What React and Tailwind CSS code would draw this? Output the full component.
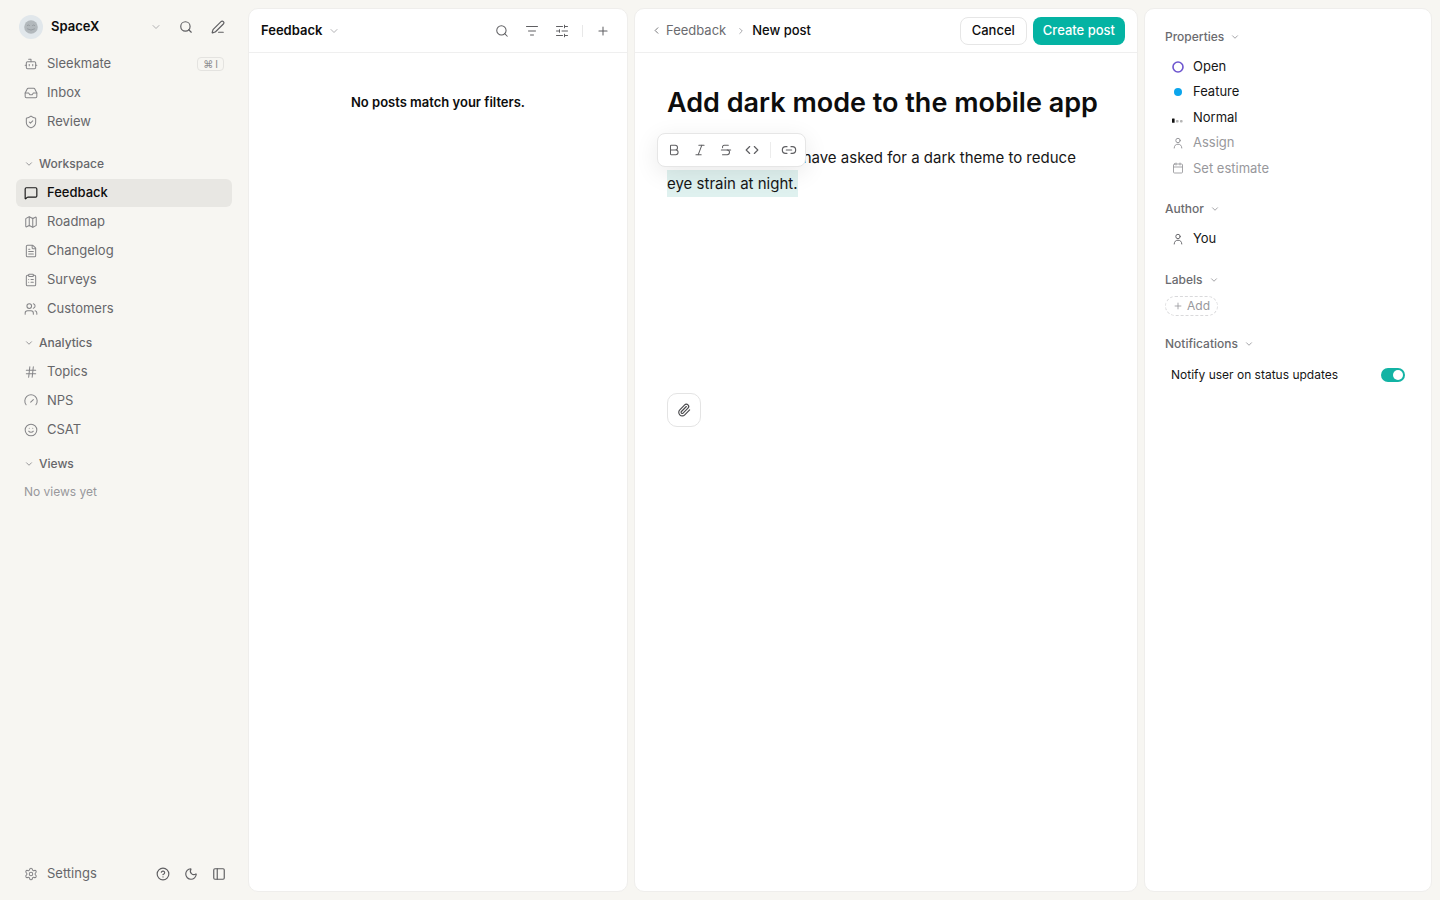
import React, { useState } from 'react';
import {
    Bold, Bot, Calendar, ChevronDown, ChevronLeft, ChevronRight, CircleHelp, ClipboardList, Code,
    FileText, Hash, Inbox, Italic, Link2, Map, MessageSquare, Moon, PanelLeft, Paperclip,
    PenLine, Plus, Search, Settings, ShieldCheck, Smile, Strikethrough, Users,
} from 'lucide-react';

const GaugeIcon = ({ size, strokeWidth, className }) => (
    <svg width={size} height={size} viewBox="0 0 24 24" fill="none" stroke="currentColor" strokeWidth={strokeWidth} strokeLinecap="round" className={className}>
        <path d="M3.6 18.5a10.6 10.6 0 1 1 16.8 0M11.5 14l4.5-4.5" />
    </svg>
);

const mainNav = [
    { label: 'Sleekmate', icon: Bot, shortcut: ['⌘', 'I'] },
    { label: 'Inbox', icon: Inbox },
    { label: 'Review', icon: ShieldCheck },
];

const workspaceNav = [
    { label: 'Feedback', icon: MessageSquare, active: true },
    { label: 'Roadmap', icon: Map },
    { label: 'Changelog', icon: FileText },
    { label: 'Surveys', icon: ClipboardList },
    { label: 'Customers', icon: Users },
];

const analyticsNav = [
    { label: 'Topics', icon: Hash },
    { label: 'NPS', icon: GaugeIcon },
    { label: 'CSAT', icon: Smile },
];

const FilterIcon = () => (
    <svg width="14" height="14" viewBox="0 0 14 14" fill="none" stroke="currentColor" strokeLinecap="round">
        <path d="M1.5 2.5h11M3.5 7h7M5.5 11h3" />
    </svg>
);

const SlidersIcon = () => (
    <svg width="14" height="14" viewBox="0 0 14 14" fill="none" stroke="currentColor" strokeLinecap="round">
        <path d="M1.5 2.5h6M9.5 2.5h3M9.5 1.2v2.6M1.5 7h3M7 7h5.5M4.5 5.7v2.6M1.5 11.5h6M9.5 11.5h3M9.5 10.2v2.6" />
    </svg>
);

const PersonIcon = () => (
    <svg width="14" height="14" viewBox="0 0 14 14" fill="none" stroke="currentColor" strokeLinecap="round">
        <circle cx="7" cy="4.5" r="2.2" />
        <path d="M3.2 12c0-2.4 1.6-3.8 3.8-3.8s3.8 1.4 3.8 3.8" />
    </svg>
);

const PriorityIcon = () => (
    <svg width="14" height="14" viewBox="0 0 14 14">
        <rect x="1" y="8.5" width="2.6" height="4.2" rx="0.5" fill="#111" />
        <rect x="5" y="10" width="2.6" height="2.6" rx="0.8" fill="#b5b5b5" />
        <rect x="9" y="10" width="2.6" height="2.6" rx="0.8" fill="#b5b5b5" />
    </svg>
);

const Avatar = () => (
    <svg width="24" height="24" viewBox="0 0 24 24">
        <circle cx="12" cy="12" r="12" fill="#e1e7eb" />
        <circle cx="12" cy="12" r="6.8" fill="#b2b8bc" />
        <path d="M8.3 10.4q1-1 2.2 0M13.5 10.4q1-1 2.2 0M8.5 14q3.5 2.4 7 0" fill="none" stroke="#969ca1" strokeWidth="1" strokeLinecap="round" />
    </svg>
);

const NavList = ({ items }) => (
    <ul className="flex flex-col gap-px">
        {items.map(({ label, icon: Icon, active, shortcut }) => (
            <li key={label}>
                <a
                    href="#"
                    className={`flex h-7 items-center gap-2 rounded-md px-2 text-[13px] ${active ? 'bg-[#e8e7e3] font-medium text-[#0d0d0d]' : 'text-[#66666a]'}`}
                >
                    <Icon size={14} strokeWidth={active ? 2 : 1.75} className={active ? 'text-[#1a1a1a]' : 'text-[#858588]'} />
                    <span className="flex-1 pl-px">{label}</span>
                    {shortcut && (
                        <kbd className="flex h-[14px] items-center gap-0.5 rounded border border-[#e4e3e0] px-[5px] font-[Inter,sans-serif] text-[10px] text-[#8c8c8e]">
                            {shortcut.map((key) => <span key={key}>{key}</span>)}
                        </kbd>
                    )}
                </a>
            </li>
        ))}
    </ul>
);

const NavHeading = ({ children }) => (
    <button type="button" className="mb-[3px] flex h-6 items-center gap-[5px] px-2 text-xs font-medium text-[#66666a]">
        <ChevronDown size={10} strokeWidth={2} className="text-[#858588]" />
        {children}
    </button>
);

const IconButton = ({ label, className = 'size-6', children }) => (
    <button type="button" aria-label={label} className={`flex shrink-0 items-center justify-center text-[#5f5f62] ${className}`}>
        {children}
    </button>
);

const PanelHeading = ({ children }) => (
    <button type="button" className="flex h-5 items-center gap-1.5 text-xs font-medium text-[#6b6b6f]">
        {children}
        <ChevronDown size={10} strokeWidth={2} className="text-[#929295]" />
    </button>
);

const Property = ({ icon, label, muted }) => (
    <button type="button" className={`flex items-center gap-2 px-1.5 text-[13px] ${muted ? 'text-[#98989c]' : 'text-[#161616]'}`}>
        {icon}
        {label}
    </button>
);

const Sidebar = () => (
    <aside className="flex w-[248px] shrink-0 flex-col px-4 py-3">
        <div className="mb-2 flex h-[30px] items-center pr-[2px]">
            <button type="button" className="flex flex-1 items-center gap-2 pr-3 pl-[3px] text-[13px] font-semibold text-[#0d0d0d]">
                <Avatar />
                SpaceX
                <ChevronDown size={12} strokeWidth={1.5} className="ml-auto text-[#98989c]" />
            </button>
            <div className="flex gap-2">
                <IconButton label="Search"><Search size={14} strokeWidth={2} /></IconButton>
                <IconButton label="New post"><PenLine size={14} strokeWidth={2} /></IconButton>
            </div>
        </div>

        <nav className="flex flex-col">
            <NavList items={mainNav} />
            <div className="mt-4">
                <NavHeading>Workspace</NavHeading>
                <NavList items={workspaceNav} />
            </div>
            <div className="mt-2">
                <NavHeading>Analytics</NavHeading>
                <NavList items={analyticsNav} />
            </div>
            <div className="mt-2">
                <NavHeading>Views</NavHeading>
                <p className="px-2 pt-[3px] text-xs leading-5 text-[#98989c]">No views yet</p>
            </div>
        </nav>

        {/* Footer */}
        <div className="mt-auto flex items-center">
            <a href="#" className="flex h-7 flex-1 items-center gap-2 px-2 text-[13px] text-[#66666a]">
                <Settings size={14} strokeWidth={1.75} className="text-[#858588]" />
                <span className="pl-px">Settings</span>
            </a>
            <div className="flex gap-1 pr-px">
                <IconButton label="Help"><CircleHelp size={14} strokeWidth={2} /></IconButton>
                <IconButton label="Dark mode"><Moon size={14} strokeWidth={2} /></IconButton>
                <IconButton label="Toggle sidebar"><PanelLeft size={14} strokeWidth={2} /></IconButton>
            </div>
        </div>
    </aside>
);

const FeedbackList = () => (
    <section className="w-[380px] shrink-0 rounded-[10px] border border-[#efeeec] bg-white">
        <header className="flex h-11 items-center border-b border-[#efefef] px-3">
            <button type="button" className="flex items-center gap-1.5 text-[13px] font-semibold text-[#0d0d0d]">
                Feedback
                <ChevronDown size={12} strokeWidth={1.5} className="text-[#98989c]" />
            </button>
            <div className="ml-auto flex items-center gap-1.5">
                <IconButton label="Search posts"><Search size={14} strokeWidth={1.75} /></IconButton>
                <IconButton label="Filter"><FilterIcon /></IconButton>
                <IconButton label="Display options"><SlidersIcon /></IconButton>
            </div>
            <div className="mx-2 h-3 w-px bg-[#e8e8e8]" />
            <IconButton label="Add post"><Plus size={14} strokeWidth={1.75} /></IconButton>
        </header>
        <p className="pt-[39px] text-center text-[13px] leading-5 font-semibold text-[#0d0d0d]">No posts match your filters.</p>
    </section>
);

const FormatToolbar = () => (
    <div role="toolbar" aria-label="Formatting" className="absolute -top-3 -left-[10px] flex items-center rounded-lg border border-[#e6e6e6] bg-white p-[3px] shadow-[0_6px_24px_rgba(0,0,0,0.09)]">
        <IconButton label="Bold" className="h-[26px] w-[26px]"><Bold size={14} strokeWidth={1.75} /></IconButton>
        <IconButton label="Italic" className="h-[26px] w-[26px]"><Italic size={14} strokeWidth={1.75} /></IconButton>
        <IconButton label="Strikethrough" className="h-[26px] w-[26px]"><Strikethrough size={14} strokeWidth={1.75} /></IconButton>
        <IconButton label="Code" className="h-[26px] w-[26px]"><Code size={14} strokeWidth={2} /></IconButton>
        <div className="mx-[5px] h-4 w-px bg-[#ececec]" />
        <IconButton label="Link" className="h-[26px] w-[26px]"><Link2 size={16} strokeWidth={1.75} /></IconButton>
    </div>
);

const PostEditor = () => {
    const [title, setTitle] = useState('Add dark mode to the mobile app');

    return (
        <section className="min-w-0 flex-1 rounded-[10px] border border-[#efeeec] bg-white">
            <header className="flex h-11 items-center border-b border-[#efefef] pr-3 pl-4">
                <a href="#" className="flex items-center gap-1 text-[13px] text-[#6b6b6f]">
                    <ChevronLeft size={11} strokeWidth={2} />
                    Feedback
                </a>
                <ChevronRight size={10} strokeWidth={2} className="mr-1.5 ml-[10px] text-[#98989c]" />
                <span className="text-[13px] font-medium text-[#0d0d0d]">New post</span>
                <div className="ml-auto flex gap-1.5">
                    <button type="button" className="h-7 rounded-lg border border-[#e6e6e6] bg-white px-[11px] text-[13px] font-medium text-[#0d0d0d]">Cancel</button>
                    <button type="button" className="h-7 rounded-lg bg-[#04b3a3] px-[10px] text-[13px] font-medium text-white">Create post</button>
                </div>
            </header>

            <div className="px-8 pt-8">
                <input
                    type="text"
                    aria-label="Post title"
                    value={title}
                    onChange={(e) => setTitle(e.target.value)}
                    className="block h-9 w-full text-[27px] font-semibold text-[#0d0d0d] outline-none"
                />
                <div className="relative mt-6">
                    <div
                        role="textbox"
                        aria-label="Post description"
                        contentEditable
                        suppressContentEditableWarning
                        className="min-h-[236px] text-[15px] leading-[26px] text-[#161616] outline-none"
                    >
                        Several customers have asked for a dark theme to reduce <br />
                        <mark className="bg-[#dff1ef] py-1 text-[#161616]">eye strain at night.</mark>
                    </div>
                    <FormatToolbar />
                </div>
                <button type="button" aria-label="Attach file" className="mt-3 flex size-[34px] items-center justify-center rounded-[10px] border border-[#e4e4e4] text-[#4a4a4d]">
                    <Paperclip size={14} strokeWidth={2} />
                </button>
            </div>
        </section>
    );
};

const PropertiesPanel = () => {
    const [notify, setNotify] = useState(true);

    return (
        <section className="flex w-72 shrink-0 flex-col gap-[18px] rounded-[10px] border border-[#efeeec] bg-white px-5 pt-[18px]">
            <div>
                <PanelHeading>Properties</PanelHeading>
                <div className="mt-[7px] grid h-[127px] grid-rows-5">
                    <Property
                        label="Open"
                        icon={<svg width="14" height="14" viewBox="0 0 14 14"><circle cx="7" cy="7" r="5" fill="none" stroke="#6e56cf" strokeWidth="1.6" /></svg>}
                    />
                    <Property
                        label="Feature"
                        icon={<svg width="14" height="14" viewBox="0 0 14 14"><circle cx="7" cy="7" r="4" fill="#0ba5ec" /></svg>}
                    />
                    <Property label="Normal" icon={<PriorityIcon />} />
                    <Property label="Assign" muted icon={<PersonIcon />} />
                    <Property label="Set estimate" muted icon={<Calendar size={12} strokeWidth={1.75} className="mx-px" />} />
                </div>
            </div>

            <div>
                <PanelHeading>Author</PanelHeading>
                <div className="mt-[7px] grid h-[26px]">
                    <Property label="You" icon={<span className="text-[#6b6b6f]"><PersonIcon /></span>} />
                </div>
            </div>

            <div>
                <PanelHeading>Labels</PanelHeading>
                <button type="button" className="mt-1.5 flex h-5 items-center gap-1 rounded-full border border-dashed border-[#d9d9db] px-[7px] text-xs text-[#98989c]">
                    <Plus size={10} strokeWidth={2} />
                    Add
                </button>
            </div>

            <div>
                <PanelHeading>Notifications</PanelHeading>
                <label className="mt-2 flex h-[26px] items-center justify-between px-1.5 text-xs text-[#161616]">
                    Notify user on status updates
                    <input
                        type="checkbox"
                        role="switch"
                        checked={notify}
                        onChange={(e) => setNotify(e.target.checked)}
                        className="flex h-[14px] w-6 appearance-none items-center rounded-full bg-[#d4d4d6] px-0.5 before:size-[10px] before:rounded-full before:bg-white checked:justify-end checked:bg-[#12b3a4]"
                    />
                </label>
            </div>
        </section>
    );
};

const App = () => (
    <div className="flex min-h-screen bg-[#f7f6f2] font-[Inter,sans-serif]">
        <Sidebar />
        <main className="flex min-w-0 flex-1 gap-1.5 py-2 pr-2">
            <FeedbackList />
            <PostEditor />
            <PropertiesPanel />
        </main>
    </div>
);

export default App;
